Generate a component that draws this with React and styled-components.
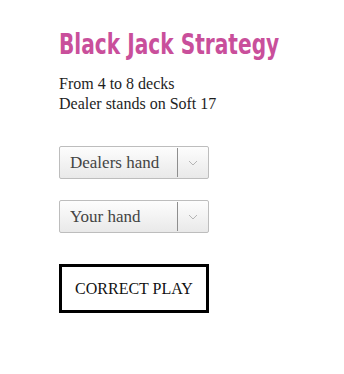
import React from 'react';
import styled, { createGlobalStyle } from 'styled-components';

const GlobalStyle = createGlobalStyle`
  body {
    margin: 0;
    background: #fff;
    font-family: "Liberation Serif", "DejaVu Serif", serif;
    color: #222;
  }
`;

const Page = styled.div`
  padding: 26px 0 0 59px;
`;

const Title = styled.h1`
  display: inline-block;
  margin: 0;
  font-family: "DejaVu Sans Condensed", "DejaVu Sans", sans-serif;
  font-weight: bold;
  font-size: 28px;
  line-height: 38px;
  color: #c94f9b;
  transform: scaleX(0.8);
  transform-origin: left center;
  white-space: nowrap;
`;

const Rules = styled.div`
  margin-top: 10px;
  font-size: 16px;
  line-height: 20px;
  color: #1e1e1e;
`;

const Form = styled.div`
  display: flex;
  flex-direction: column;
  gap: 21px;
  margin-top: 32px;
`;

const SelectBox = styled.div`
  display: flex;
  width: 150px;
  height: 33px;
  box-sizing: border-box;
  border: 1px solid #bdbdbd;
  border-radius: 2px;
  background: linear-gradient(#fdfdfd, #e9e9e9);
`;

const Select = styled.select`
  flex: 1;
  min-width: 0;
  appearance: none;
  border: 0;
  background: transparent;
  padding: 0 0 0 10px;
  font-family: "Liberation Serif", "DejaVu Serif", serif;
  font-size: 17px;
  color: #444;
  outline: none;
`;

const Arrow = styled.div`
  width: 30px;
  display: flex;
  align-items: center;
  justify-content: center;
  border-left: 1px solid #8e8e8e;
  margin: 1px 0;
`;

const PlayButton = styled.button`
  align-self: flex-start;
  margin-top: 10px;
  width: 150px;
  height: 49px;
  box-sizing: border-box;
  border: 3px solid #000;
  background: #fff;
  font-family: "Liberation Serif", "DejaVu Serif", serif;
  font-size: 16px;
  color: #111;
  text-transform: uppercase;
  cursor: pointer;
`;

const Chevron = () => (
  <svg width="10" height="6" viewBox="0 0 10 6">
    <path d="M1 1l4 4 4-4" fill="none" stroke="#b5b5b5" strokeWidth="1" />
  </svg>
);

const HandSelect = ({ label }) => (
  <SelectBox>
    <Select defaultValue="">
      <option value="">{label}</option>
    </Select>
    <Arrow>
      <Chevron />
    </Arrow>
  </SelectBox>
);

export default function App() {
  return (
    <Page>
      <GlobalStyle />
      <Title>Black Jack Strategy</Title>
      <Rules>
        From 4 to 8 decks
        <br />
        Dealer stands on Soft 17
      </Rules>
      <Form>
        <HandSelect label="Dealers hand" />
        <HandSelect label="Your hand" />
        <PlayButton>Correct play</PlayButton>
      </Form>
    </Page>
  );
}
